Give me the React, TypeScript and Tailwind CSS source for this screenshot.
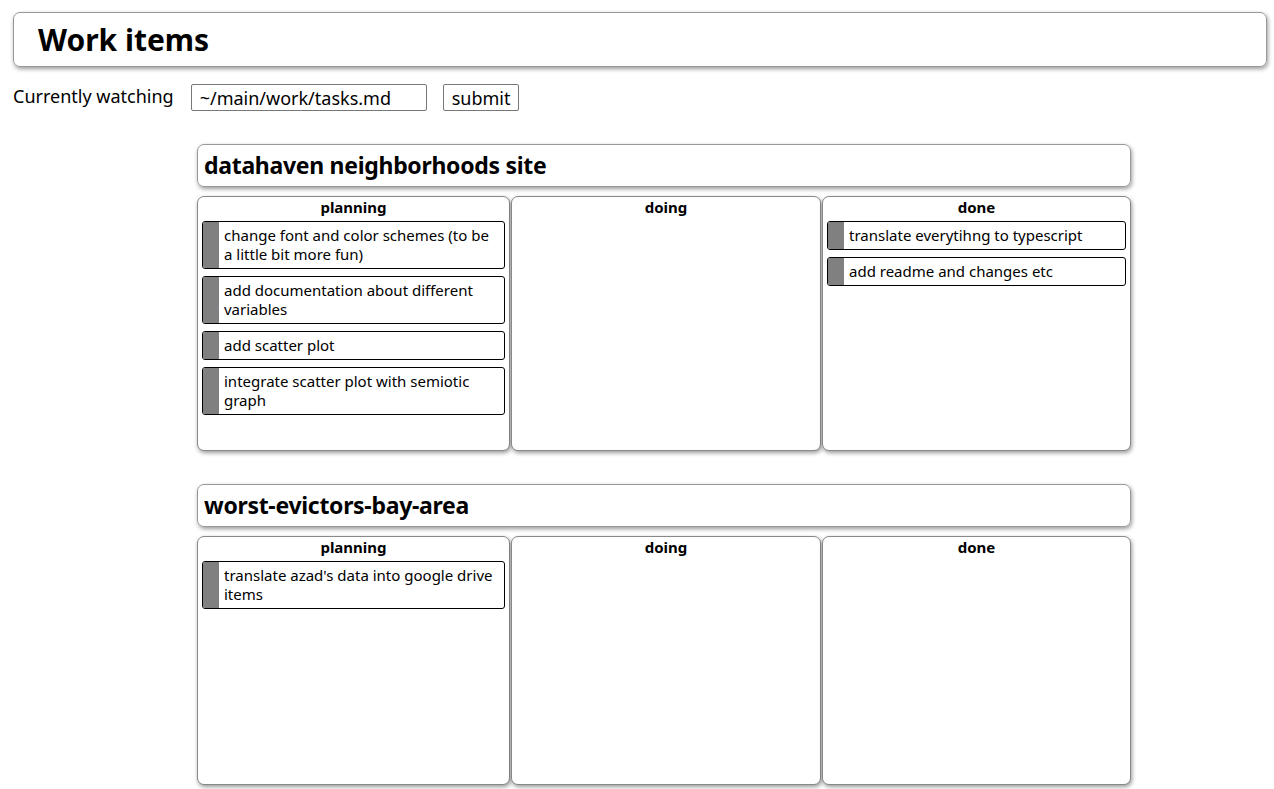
import React from "react";

interface Project {
  name: string;
  height: string;
  columns: { title: string; items: string[] }[];
}

const projects: Project[] = [
  {
    name: "datahaven neighborhoods site",
    height: "h-[255px]",
    columns: [
      {
        title: "planning",
        items: [
          "change font and color schemes (to be a little bit more fun)",
          "add documentation about different variables",
          "add scatter plot",
          "integrate scatter plot with semiotic graph",
        ],
      },
      { title: "doing", items: [] },
      {
        title: "done",
        items: ["translate everytihng to typescript", "add readme and changes etc"],
      },
    ],
  },
  {
    name: "worst-evictors-bay-area",
    height: "h-[249px]",
    columns: [
      { title: "planning", items: ["translate azad's data into google drive items"] },
      { title: "doing", items: [] },
      { title: "done", items: [] },
    ],
  },
];

function Card({ text }: { text: string }) {
  return (
    <div className="flex border border-black rounded-[3px] overflow-hidden">
      <span className="w-4 shrink-0 bg-[#808080]" />
      <span className="pl-[5px] pr-[6px] py-[4px] text-[15px] leading-[19px]">{text}</span>
    </div>
  );
}

function Column({ title, items, height }: { title: string; items: string[]; height: string }) {
  return (
    <div
      className={`${height} border border-[#888] rounded-[7px] bg-white shadow-[1px_2px_4px_rgba(0,0,0,0.4)] px-1 flex flex-col`}
    >
      <div className="text-center font-bold text-[15px] leading-[20px] mb-[4px]">{title}</div>
      <div className="flex flex-col gap-[7px]">
        {items.map((t) => (
          <Card key={t} text={t} />
        ))}
      </div>
    </div>
  );
}

export default function App() {
  return (
    <div className="min-h-screen bg-white text-black" style={{ fontFamily: '"Noto Sans", sans-serif' }}>
      <div className="pt-3 pl-[13px] pr-[7px]">
        <div className="h-[55px] border border-[#999] rounded-[7px] shadow-[1px_2px_4px_rgba(0,0,0,0.4)] flex items-center pl-6">
          <h1 className="text-[30px] font-bold leading-none">Work items</h1>
        </div>
        <div className="flex items-start mt-[17px] h-[27px]">
          <span className="text-[18px] leading-[24px] mr-[17px]">Currently watching</span>
          <input
            className="w-[236px] h-[27px] border border-[#777] rounded-[2px] px-2 text-[18px] leading-none"
            defaultValue="~/main/work/tasks.md"
            readOnly
          />
          <button className="ml-4 h-[27px] px-2 border border-[#777] rounded-[2px] text-[18px] leading-none bg-white">
            submit
          </button>
        </div>
      </div>
      <div className="ml-[197px] w-[934px] mt-[33px] flex flex-col gap-[33px]">
        {projects.map((p) => (
          <section key={p.name}>
            <div className="h-[43px] border border-[#999] rounded-[7px] shadow-[1px_2px_4px_rgba(0,0,0,0.4)] flex items-center pl-[6px]">
              <h2 className="text-[23px] font-bold leading-none tracking-[-0.3px]">{p.name}</h2>
            </div>
            <div className="grid grid-cols-[313px_310px_309px] gap-[1px] mt-[9px]">
              {p.columns.map((c) => (
                <Column key={c.title} title={c.title} items={c.items} height={p.height} />
              ))}
            </div>
          </section>
        ))}
      </div>
    </div>
  );
}
